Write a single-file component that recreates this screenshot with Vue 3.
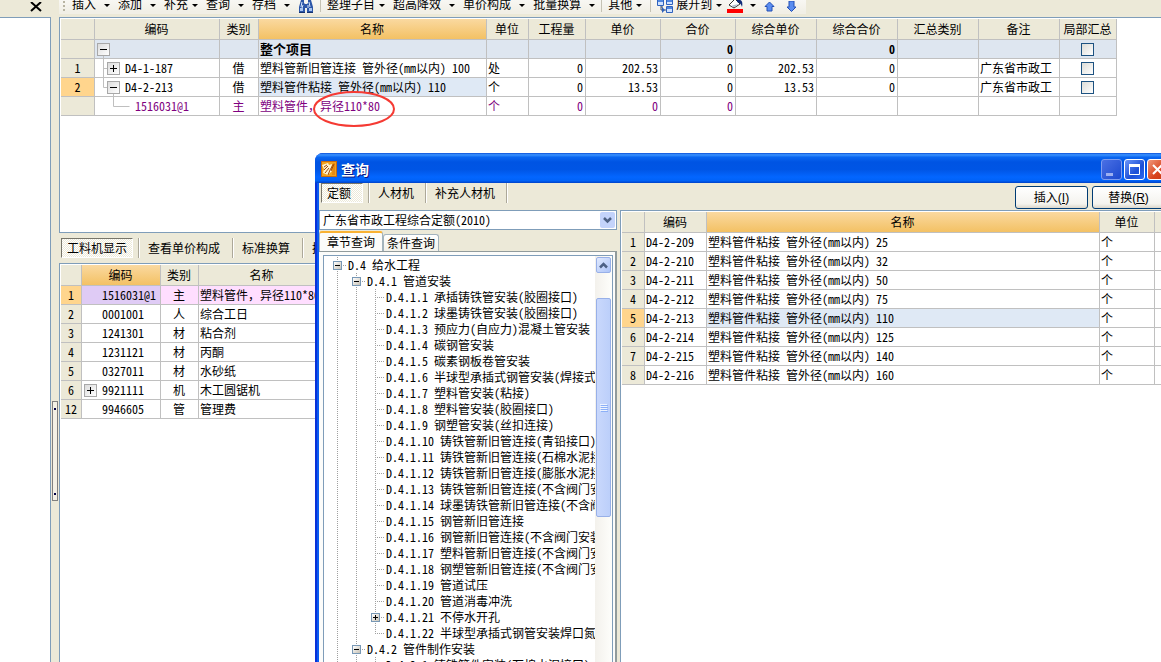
<script setup>
import { h, ref } from 'vue'

// Splits a label so half-width characters sit on a 6px grid beside 12px ideographs.
const Txt = (props) =>
  (String(props.t).match(/[\x20-\x7e]+|[^\x20-\x7e]+/g) || []).map((run) =>
    h('span', { class: /[\x20-\x7e]/.test(run[0]) ? 'half' : 'full' }, run)
  )
Txt.props = ['t']

const tools = [
  { t: '插入', split: true },
  { t: '添加', split: true },
  { t: '补充' },
  { t: '查询', split: true },
  { t: '存档', split: true },
]
const tools2 = [
  { t: '整理子目' },
  { t: '超高降效', split: true },
  { t: '单价构成', split: true },
  { t: '批量换算', split: true },
]

const mainCols = [
  { t: '' }, { t: '编码' }, { t: '类别' }, { t: '名称', hot: true },
  { t: '单位' }, { t: '工程量' }, { t: '单价' }, { t: '合价' },
  { t: '综合单价' }, { t: '综合合价' }, { t: '汇总类别' }, { t: '备注' },
  { t: '局部汇总' },
]
const mainRows = [
  { no: '', kind: 'root', code: '', type: '', name: '整个项目', unit: '', qty: '', price: '', sum: '0', cprice: '', csum: '0', note: '', check: true },
  { no: '1', kind: 'plus', code: 'D4-1-187', type: '借', name: '塑料管新旧管连接 管外径(mm以内) 100', unit: '处', qty: '0', price: '202.53', sum: '0', cprice: '202.53', csum: '0', note: '广东省市政工', check: true },
  { no: '2', kind: 'minus', code: 'D4-2-213', type: '借', name: '塑料管件粘接 管外径(mm以内) 110', unit: '个', qty: '0', price: '13.53', sum: '0', cprice: '13.53', csum: '0', note: '广东省市政工', check: true, cur: true },
  { no: '', kind: 'child', code: '1516031@1', type: '主', name: '塑料管件，异径110*80', unit: '个', qty: '0', price: '0', sum: '0', cprice: '', csum: '', note: '', check: false },
]

const resCols = [{ t: '' }, { t: '编码', hot: true }, { t: '类别' }, { t: '名称' }]
const resRows = [
  ['1', '1516031@1', '主', '塑料管件，异径110*80'],
  ['2', '0001001', '人', '综合工日'],
  ['3', '1241301', '材', '粘合剂'],
  ['4', '1231121', '材', '丙酮'],
  ['5', '0327011', '材', '水砂纸'],
  ['6', '9921111', '机', '木工圆锯机'],
  ['12', '9946605', '管', '管理费'],
]

const quotaCols = [{ t: '' }, { t: '编码' }, { t: '名称', hot: true }, { t: '单位' }, { t: '' }]
const quotaRows = ['25', '32', '50', '75', '110', '125', '140', '160'].map((d, i) => ({
  no: i + 1,
  code: 'D4-2-' + (209 + i),
  name: '塑料管件粘接 管外径(mm以内) ' + d,
}))

const sections = [
  '承插铸铁管安装(胶圈接口)', '球墨铸铁管安装(胶圈接口)', '预应力(自应力)混凝土管安装', '碳钢管安装',
  '碳素钢板卷管安装', '半球型承插式钢管安装(焊接式)', '塑料管安装(粘接)', '塑料管安装(胶圈接口)',
  '钢塑管安装(丝扣连接)', '铸铁管新旧管连接(青铅接口)', '铸铁管新旧管连接(石棉水泥接口)',
  '铸铁管新旧管连接(膨胀水泥接口)', '铸铁管新旧管连接(不含阀门安装)', '球墨铸铁管新旧管连接(不含阀门安装)',
  '钢管新旧管连接', '钢管新旧管连接(不含阀门安装)', '塑料管新旧管连接(不含阀门安装)',
  '钢塑管新旧管连接(不含阀门安装)', '管道试压', '管道消毒冲洗', '不停水开孔', '半球型承插式钢管安装焊口氮气保护',
]
const tree = [
  { g: ['line'], box: '-', t: 'D.4 给水工程' },
  { g: ['line', 'line'], box: '-', t: 'D.4.1 管道安装' },
  ...sections.map((s, i) => ({
    g: ['line', 'line', i === sections.length - 1 ? 'last' : 'line'],
    box: i === 20 ? '+' : '',
    t: `D.4.1.${i + 1} ${s}`,
  })),
  { g: ['line', 'line'], box: '-', t: 'D.4.2 管件制作安装' },
  { g: ['line', 'line', 'line'], box: '', t: 'D.4.2.1 铸铁管件安装(石棉水泥接口)' },
]
const book = ref('a')
</script>

<template>
  <div class="app">
    <aside class="side">
      <div class="side-head">
        <button class="side-close" aria-label="关闭">
          <svg width="12" height="11" viewBox="0 0 12 11"><path d="M1 0l10 9M11 0L1 9" stroke="#000" stroke-width="2" fill="none" /></svg>
        </button>
      </div>
      <div class="side-body"></div>
    </aside>
    <div class="splitter"><div class="grip"></div></div>

    <main class="main">
      <div class="toolbar">
        <div class="tools">
          <i class="handle"></i>
          <button v-for="b in tools" :key="b.t" class="tool" :class="{ split: b.split }">{{ b.t }}<i class="arrow"></i></button>
          <button class="tool find" aria-label="查找">
            <svg width="16" height="14" viewBox="0 0 16 14">
              <path d="M3 0h3v3l1 1h2l1-1V0h3l2 7v5H9V8H7v4H1V7z" fill="#2c56a8" />
              <path d="M4 2L3 7M11 2l1 5M5 5L4 8M10 5v3" stroke="#d5e6ff" fill="none" />
              <path d="M2 8h3v3H2zM11 8h3v3h-3z" fill="#a9c5f0" />
              <path d="M1 12.500h6M9 12.500h6" stroke="#16336e" />
            </svg>
          </button>
          <i class="sep"></i>
          <button v-for="b in tools2" :key="b.t" class="tool" :class="{ split: b.split }">{{ b.t }}<i class="arrow"></i></button>
          <i class="sep tight"></i>
          <button class="tool">其他<i class="arrow"></i></button>
          <i class="sep"></i>
          <button class="tool expand">
            <svg width="16" height="14" viewBox="0 0 16 14">
              <path d="M4 5v5h5M4 7h2" stroke="#44546e" fill="none" />
              <path d="M.5-.5h6v6h-6zM9.500-.5h6v5h-6zM9.500 6.500h6v6h-6z" fill="#cfe2ff" stroke="#2f62bd" />
              <path d="M1 1h5M10 1h5M10 8h5" stroke="#4f86df" stroke-width="2" />
              <path d="M5 7l3 3-3 3z" fill="#2f62bd" />
            </svg>展开到<i class="arrow"></i>
          </button>
          <button class="tool fill" aria-label="填充颜色">
            <svg width="17" height="14" viewBox="0 0 17 14">
              <path d="M2 5l6-6 5 5-6 4z" fill="#fff" stroke="#333" />
              <path d="M7 5l5-1-5 3-3-1z" fill="#aebbd0" />
              <path d="M10 0c5-1 6 2 5 7-1-3-2-4-5-5z" fill="#102b78" />
              <path d="M0 9h16v4H0z" fill="#f00" />
            </svg><i class="arrow"></i>
          </button>
          <button class="tool up" aria-label="上移">
            <svg width="11" height="12" viewBox="0 0 11 12"><path d="M5.500 1l4.500 4.500H8V10H3V5.500H1z" fill="#5b8df0" stroke="#2450b5" /></svg>
          </button>
          <button class="tool down" aria-label="下移">
            <svg width="11" height="12" viewBox="0 0 11 12"><path d="M5.500 10.500L1 6h2V0h5v6h2z" fill="#5b8df0" stroke="#2450b5" /></svg>
          </button>
        </div>
      </div>

      <section class="pane top-pane">
        <table class="grid main-grid">
          <colgroup><col v-for="(c, i) in mainCols" :key="i" :class="'m' + i" /></colgroup>
          <thead>
            <tr><th v-for="(c, i) in mainCols" :key="i" :class="{ hot: c.hot }">{{ c.t }}</th></tr>
          </thead>
          <tbody>
            <tr v-for="(r, i) in mainRows" :key="i" :class="[r.kind, { cur: r.cur }]">
              <td class="no"><Txt :t="r.no" /></td>
              <td class="code">
                <div class="node">
                  <svg class="lines" :width="r.kind === 'child' ? 40 : 30" height="19">
                    <g stroke="#bfbfbf" fill="none">
                      <path v-if="r.kind === 'root'" d="M8.500 15v4" />
                      <path v-if="r.kind === 'plus'" d="M8.500 0v19M9 9.500h4" />
                      <path v-if="r.kind === 'minus'" d="M8.500 0v9.500h4M18.500 15v4" />
                      <path v-if="r.kind === 'child'" d="M18.500 0v9.500h16" />
                    </g>
                  </svg>
                  <button v-if="r.kind !== 'child'" class="toggle" :class="r.kind" aria-label="展开或折叠">
                    <svg width="11" height="11"><path :d="r.kind === 'plus' ? 'M2 5.500h7M5.500 2v7' : 'M2 5.500h7'" stroke="#000" /></svg>
                  </button>
                  <span><Txt :t="r.code" /></span>
                </div>
              </td>
              <td class="mid">{{ r.type }}</td>
              <td class="name"><Txt :t="r.name" /></td>
              <td>{{ r.unit }}</td>
              <td class="num"><Txt :t="r.qty" /></td>
              <td class="num"><Txt :t="r.price" /></td>
              <td class="num"><Txt :t="r.sum" /></td>
              <td class="num"><Txt :t="r.cprice" /></td>
              <td class="num"><Txt :t="r.csum" /></td>
              <td></td>
              <td>{{ r.note }}</td>
              <td class="mid"><input v-if="r.check" type="checkbox" class="check" aria-label="局部汇总" /></td>
            </tr>
          </tbody>
        </table>
        <svg class="mark" width="84" height="40" viewBox="0 0 84 40"><ellipse cx="42" cy="20" rx="40" ry="17" fill="none" stroke="#f53a33" stroke-width="2" /></svg>
      </section>

      <nav class="views">
        <button class="view pressed">工料机显示</button><i class="vsep"></i>
        <button class="view">查看单价构成</button><i class="vsep"></i>
        <button class="view">标准换算</button><i class="vsep"></i>
        <button class="view">换算信息</button>
      </nav>

      <section class="pane bottom-pane">
        <table class="grid res-grid">
          <colgroup><col v-for="(c, i) in resCols" :key="i" :class="'r' + i" /></colgroup>
          <thead>
            <tr><th v-for="(c, i) in resCols" :key="i" :class="{ hot: c.hot }">{{ c.t }}</th></tr>
          </thead>
          <tbody>
            <tr v-for="(r, i) in resRows" :key="i" :class="{ active: i === 0 }">
              <td class="no"><Txt :t="r[0]" /></td>
              <td class="rcode">
                <div class="node">
                  <button v-if="r[0] === '6'" class="toggle inset" aria-label="展开">
                    <svg width="11" height="11"><path d="M2 5.500h7M5.500 2v7" stroke="#000" /></svg>
                  </button>
                  <span class="rtext"><Txt :t="r[1]" /></span>
                </div>
              </td>
              <td class="mid">{{ r[2] }}</td>
              <td><Txt :t="r[3]" /></td>
            </tr>
          </tbody>
        </table>
      </section>
    </main>

    <div class="dialog" role="dialog" aria-label="查询">
      <header class="title">
        <svg class="logo" width="16" height="16" viewBox="0 0 16 16">
          <rect width="16" height="16" fill="#c86a10" />
          <rect x="1" y="1" width="14" height="14" fill="#f3a31c" />
          <path d="M1 4l6-2 1 2 3-1-1 5 1 2-4 4-5-2 1-4z" fill="#fff3cf" />
          <path d="M3 6l3-2M3 9l4-4M4 12l4-5M13 2L9 9l-2 5" stroke="#a34a06" fill="none" />
          <path d="M12 2h2v12h-3z" fill="#e58a14" />
          <path d="M13 3l-3 7" stroke="#a34a06" />
        </svg>
        <h1>查询</h1>
        <button class="cap min" aria-label="最小化"><svg width="19" height="19"><path d="M4 13h7v3H4z" fill="#9db0f0" /></svg></button>
        <button class="cap" aria-label="最大化"><svg width="19" height="19"><path d="M4.500 5.500h10v9h-10z" fill="none" stroke="#fff" /><path d="M4 4h11v3H4z" fill="#fff" /></svg></button>
        <button class="cap close" aria-label="关闭"><svg width="19" height="19"><path d="M5 5l9 9M14 5l-9 9" stroke="#fff" stroke-width="2" /></svg></button>
      </header>
      <div class="client">
        <div class="left">
          <nav class="kinds">
            <button class="kind pressed">定额</button><i class="ksep"></i>
            <button class="kind">人材机</button><i class="ksep"></i>
            <button class="kind">补充人材机</button><i class="ksep"></i>
          </nav>
          <div class="combo">
            <select v-model="book" aria-label="定额库"><option value="a">广东省市政工程综合定额(2010)</option></select>
            <svg class="drop" width="15" height="16" viewBox="0 0 15 16"><rect width="15" height="16" rx="2" fill="#c3d3fb" /><path d="M4 6l3.500 3.500L11 6" stroke="#4d6185" stroke-width="2.500" fill="none" /></svg>
          </div>
          <div class="pages">
            <button class="page on">章节查询</button><button class="page">条件查询</button>
          </div>
          <div class="sheet">
            <div class="treebox">
              <ul class="tree">
                <li v-for="(n, i) in tree" :key="i">
                  <span v-for="(g, k) in n.g" :key="k" class="guide" :class="[g, { tee: k === n.g.length - 1 }]">
                    <button v-if="n.box && k === n.g.length - 1" class="box" aria-label="展开或折叠">
                      <svg width="7" height="7"><path :d="n.box === '+' ? 'M1 3.500h5M3.500 1v5' : 'M1 3.500h5'" stroke="#000" /></svg>
                    </button>
                  </span>
                  <span class="label"><Txt :t="n.t" /></span>
                </li>
              </ul>
              <div class="scroll">
                <button class="sbtn" aria-label="向上滚动"><svg width="13" height="13"><path d="M3 8.500L6.500 5 10 8.500" stroke="#4d6185" stroke-width="2.500" fill="none" /></svg></button>
                <div class="thumb">
                  <svg width="8" height="8"><path d="M0 .5h7M0 2.500h7M0 4.500h7M0 6.500h7" stroke="#eef4fe" /><path d="M1 1.500h7M1 3.500h7M1 5.500h7M1 7.500h7" stroke="#8cb0f8" /></svg>
                </div>
              </div>
            </div>
          </div>
        </div>
        <div class="right">
          <div class="actions">
            <button class="act">插入<span class="key">(<u>I</u>)</span></button>
            <button class="act">替换<span class="key">(<u>R</u>)</span></button>
          </div>
          <div class="pane quota">
            <table class="grid quota-grid">
              <colgroup><col v-for="(c, i) in quotaCols" :key="i" :class="'q' + i" /></colgroup>
              <thead>
                <tr><th v-for="(c, i) in quotaCols" :key="i" :class="{ hot: c.hot }">{{ c.t }}</th></tr>
              </thead>
              <tbody>
                <tr v-for="r in quotaRows" :key="r.no" :class="{ cur: r.no === 5 }">
                  <td class="no"><Txt :t="r.no" /></td>
                  <td><Txt :t="r.code" /></td>
                  <td class="name"><Txt :t="r.name" /></td>
                  <td>个</td>
                  <td></td>
                </tr>
              </tbody>
            </table>
          </div>
        </div>
      </div>
    </div>
  </div>
</template>

<style>
body { margin: 0; }
.half { font-family: "Noto Sans Mono CJK SC", "DejaVu Sans Mono", monospace; }
.full { font-family: "Noto Sans CJK SC", sans-serif; }
</style>

<style scoped>
.app {
  position: relative;
  display: flex;
  height: 100vh;
  overflow: hidden;
  background: #ece9d8;
  color: #000;
  font: 12px/16px "Noto Sans CJK SC", sans-serif;
  white-space: pre;
}
.app * { box-sizing: border-box; }
button {
  margin: 0;
  padding: 0;
  border: 0;
  background: none;
  color: inherit;
  font: inherit;
  white-space: pre;
}
svg { display: block; flex: none; }

.side { display: flex; flex-direction: column; width: 51px; flex: none; }
.side-head { height: 17px; padding-left: 30px; }
.side-body { flex: 1; background: #fff; border: solid #7f9db9; border-width: 1px 1px 0 0; }
.splitter { flex: none; width: 8px; padding: 401px 1px 0; }
.grip {
  height: 100px;
  border: 1px solid #808080;
  background:
    radial-gradient(circle at 2px 7px, #004 1px, transparent 1px),
    radial-gradient(circle at 2px 92px, #004 1px, transparent 1px),
    #f3f1e6;
}

.main { display: flex; flex-direction: column; flex: 1; min-width: 0; }
.toolbar { display: flex; height: 17px; flex: none; overflow: hidden; }
.tools {
  display: flex;
  align-items: flex-end;
  height: 12px;
  padding: 0 9px 0 4px;
  background: linear-gradient(#f8f7f3, #f1efe6);
  box-shadow: 0 2px #f1efe6;
}
.handle { width: 2px; height: 10px; margin: 0 7px 1px 0; background: repeating-linear-gradient(#b8b4a2 0 2px, transparent 2px 4px); }
.tool { display: flex; align-items: center; flex: none; height: 17px; padding-right: 8px; }
.arrow { width: 6px; margin: 3px 0 0 4px; border: solid transparent; border-width: 3px 3px 0; border-top-color: #000; }
.tool.split .arrow { margin-left: 8px; }
.tool svg { margin-top: 6px; }
.tool.find { padding-right: 6px; }
.sep { width: 1px; height: 13px; margin-right: 6px; background: #c5c2b4; }
.sep.tight { margin-left: -2px; }
.expand svg { margin-right: 3px; }
.tool.expand { padding-right: 5px; }
.fill .arrow { margin-left: 6px; }
.tool.up { padding-right: 11px; }
.tool.down { padding-right: 0; }

.pane { background: #fff; border: 1px solid #7f9db9; padding: 1px 0 0 1px; overflow: hidden; }
.top-pane { position: relative; height: 216px; flex: none; border-right: 0; }
.bottom-pane { flex: 1; border-right: 0; border-bottom: 0; }
.mark { position: absolute; left: 252px; top: 71px; }

.grid { border-collapse: separate; border-spacing: 0; table-layout: fixed; }
.grid th, .grid td {
  height: 19px;
  padding: 0 3px 0 1px;
  border: solid #c0c0c0;
  border-width: 0 1px 1px 0;
  overflow: hidden;
  line-height: 16px;
  font-weight: normal;
  text-align: left;
}
.grid th { height: 21px; padding: 0 1px 0 0; background: #ece9d8; text-align: center; }
.grid th.hot { background: linear-gradient(#fad9a0, #f3c164); }
.grid td.no { padding: 0; background: #ece9d8; text-align: center; }
.grid td.mid { padding: 0 1px 0 0; text-align: center; }
.grid td.num { padding-right: 2px; text-align: right; }
.grid td.code, .grid td.rcode { padding: 0; }
.grid .cur td.no, .grid .active td.no { background: #ffd58d; }
.cur td.name { background: #dfe9f5; }
.root td:not(.no) { background: #dee6f0; font-weight: bold; }
.root td.name { font-size: 13px; }
.child td { color: #800080; }
.active td { background: #ffdeff; }
.grid .active td.rcode { background: #dfcbf5; }

.main-grid { width: 1056px; }
.m0 { width: 34px; } .m1 { width: 125px; } .m2 { width: 39px; } .m3 { width: 228px; }
.m4 { width: 42px; } .m5, .m12 { width: 57px; } .m6, .m7 { width: 75px; }
.m8, .m9, .m10, .m11 { width: 81px; }
.res-grid { width: 265px; }
.r0 { width: 21px; } .r1 { width: 79px; } .r2 { width: 38px; } .r3 { width: 127px; }
.quota-grid { width: 573px; }
.q0 { width: 23px; } .q1 { width: 62px; } .q2 { width: 393px; } .q3 { width: 55px; } .q4 { width: 40px; }

.node { position: relative; display: flex; align-items: center; height: 18px; }
.lines { align-self: flex-start; }
.toggle {
  position: absolute;
  left: 12px;
  top: 3px;
  width: 13px;
  height: 13px;
  border: 1px solid #a8a8a8;
  background: linear-gradient(135deg, #dcdcdc, #fff);
}
.toggle.root, .toggle.inset { left: 2px; }
.rtext { padding-left: 20px; }
.check {
  appearance: none;
  display: block;
  width: 13px;
  height: 13px;
  margin: 1px auto 0;
  border: 1px solid #1d5281;
  background: linear-gradient(135deg, #dcdcd7, #fff);
}

.views { display: flex; align-items: center; height: 30px; flex: none; padding-left: 2px; overflow: hidden; }
.view { flex: none; height: 20px; padding: 0 12px 0 8px; }
.pressed {
  border: solid;
  border-width: 1px;
  border-color: #77756a #fff #fff #77756a;
  background: repeating-conic-gradient(#fff 0 25%, #ece9d8 0 50%) 0 0 / 2px 2px;
}
.view.pressed { padding: 0 5px; width: 72px; }
.vsep { flex: none; width: 2px; height: 20px; border-left: 1px solid #aca899; border-right: 1px solid #fff; }
.view.pressed + .vsep { margin-left: 5px; }

.dialog {
  position: absolute;
  left: 315px;
  right: -12px;
  top: 153px;
  bottom: 0;
  display: flex;
  flex-direction: column;
  overflow: hidden;
  border-radius: 8px 8px 0 0;
  background: #0831d9;
}
.title {
  display: flex;
  align-items: center;
  gap: 2px;
  flex: none;
  height: 30px;
  padding: 2px 5px 0 6px;
  background: linear-gradient(#0a4fd8 0, #3b93ff 6%, #0a66f0 14%, #0054e3 30%, #0055e5 55%, #0366ff 80%, #0062f8 92%, #0042c8 100%);
}
.title h1 { flex: 1; margin: 0 0 0 2px; color: #fff; font: bold 14px/20px "Noto Sans CJK SC", sans-serif; text-shadow: 1px 1px 0 #0a1883; }
.cap { flex: none; width: 21px; height: 21px; border: 1px solid #fff; border-radius: 3px; background: linear-gradient(135deg, #6d96f8, #1c4fd6 60%, #2c6af0); }
.cap.min { border-color: #7f9df0; background: linear-gradient(135deg, #4a70e4, #1c49cf); }
.cap.close { background: linear-gradient(135deg, #f0997c, #d8431c 60%, #c63a14); }
.client {
  flex: 1;
  display: flex;
  min-height: 0;
  margin: 0 4px;
  background: #ece9d8;
  box-shadow: -2px 0 #0a5cf0;
}
.left { display: flex; flex-direction: column; width: 298px; flex: none; }
.kinds { display: flex; height: 27px; flex: none; padding: 0 0 0 2px; }
.kind { height: 20px; padding: 0 11px 0 8px; }
.kind.pressed { width: 42px; padding: 0 5px; text-align: left; }
.ksep { width: 2px; height: 20px; border-left: 1px solid #aca899; border-right: 1px solid #fff; }
.kind.pressed + .ksep { margin-left: 5px; }
.combo { position: relative; height: 20px; flex: none; }
.combo select {
  appearance: none;
  width: 100%;
  height: 20px;
  padding: 0 18px 0 3px;
  border: 1px solid #7f9db9;
  border-radius: 0;
  background: #fff;
  color: #000;
  font: 12px/16px "Noto Sans Mono CJK SC", "Noto Sans CJK SC", sans-serif;
}
.drop { position: absolute; right: 2px; top: 2px; pointer-events: none; }
.pages { display: flex; align-items: flex-end; flex: none; height: 21px; padding-top: 1px; }
.page { height: 17px; width: 56px; border: 1px solid #a3b3bd; border-bottom: 0; border-radius: 3px 3px 0 0; background: linear-gradient(#fff, #f2f1ea); }
.page.on { width: 64px; height: 20px; border-top: 2px solid #f9b233; background: #fcfcfa; line-height: 16px; }
.sheet { flex: 1; display: flex; min-height: 0; padding: 3px 2px 0 4px; border: 1px solid #919b9c; border-width: 1px 2px 0 0; background: #fcfcfa; }
.treebox { flex: 1; display: flex; min-width: 0; border: 1px solid #7f9db9; border-bottom: 0; background: #fff; }
.tree { flex: 1; min-width: 0; margin: 0; padding: 1px 0 0 4px; overflow: hidden; list-style: none; }
.tree li { display: flex; height: 16px; }
.guide {
  --dots: repeating-linear-gradient(#a0a0a0 0 1px, transparent 1px 2px);
  --dash: repeating-linear-gradient(90deg, #a0a0a0 0 1px, transparent 1px 2px);
  flex: none;
  display: block;
  width: 19px;
  height: 16px;
  padding: 4px 0 0 5px;
  background: var(--dots) 9px 0 / 1px 100% no-repeat;
}
.guide.tee { background: var(--dots) 9px 0 / 1px 100% no-repeat, var(--dash) 9px 8px / 9px 1px no-repeat; }
.guide.last { background: var(--dots) 9px 0 / 1px 8px no-repeat, var(--dash) 9px 8px / 9px 1px no-repeat; }
.box { display: block; width: 9px; height: 9px; border: 1px solid #7898b5; background: linear-gradient(135deg, #fff, #c8c2b5); }
.label { flex: none; padding-left: 1px; }
.scroll { flex: none; width: 17px; padding: 1px 1px 0; background: linear-gradient(90deg, #f3f1ec, #fefefb); }
.sbtn { display: block; width: 15px; height: 16px; border: 1px solid #98b0e8; border-radius: 2px; background: linear-gradient(135deg, #e1eafe, #adc4f8); }
.thumb {
  display: flex;
  align-items: center;
  justify-content: center;
  height: 219px;
  margin-top: 25px;
  border: 1px solid #98b0e8;
  border-radius: 2px;
  background: linear-gradient(90deg, #c9d8fc, #bccffa);
}
.right { flex: 1; display: flex; flex-direction: column; min-width: 0; padding-left: 3px; }
.actions { display: flex; justify-content: flex-end; gap: 4px; flex: none; height: 27px; padding: 3px 4px 0 0; }
.act { width: 73px; height: 23px; border: 1px solid #003c74; border-radius: 3px; background: linear-gradient(#fff, #f4f3ee 80%, #dcd7cb); }
.key { font-family: "Liberation Sans", sans-serif; }
.quota { flex: 1; border-bottom: 0; }
</style>
